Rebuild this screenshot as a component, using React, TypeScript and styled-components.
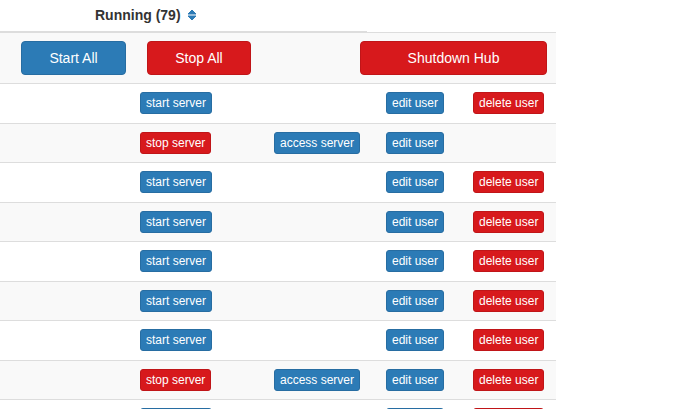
import React from "react";
import styled, { createGlobalStyle } from "styled-components";

const GlobalStyle = createGlobalStyle`
  html, body {
    margin: 0;
    padding: 0;
    background: #fff;
    font-family: "Liberation Sans", Arial, Helvetica, sans-serif;
    font-size: 14px;
    color: #333;
    overflow: hidden;
  }
  * { box-sizing: border-box; }
`;

const primary = "#2c7bb6";
const primaryBorder = "#276da2";
const danger = "#d7191c";
const dangerBorder = "#c01518";

const Page = styled.div`
  width: 679px;
  height: 409px;
  overflow: hidden;
`;

const Table = styled.div`
  width: 556px;
`;

const HeaderRow = styled.div`
  display: flex;
  height: 33px;
`;

const HeaderCell = styled.div`
  width: 367px;
  height: 33px;
  padding: 5px 0 0 95px;
  border-bottom: 2px solid #ddd;
  display: flex;
  align-items: flex-start;
  gap: 6px;
`;

const HeaderFiller = styled.div`
  flex: 1;
  height: 33px;
  border-bottom: 1px solid #ddd;
`;

const HeaderLabel = styled.span`
  font-weight: bold;
  font-size: 14px;
  line-height: 20px;
  color: #333;
`;

const SortIcon = styled.svg`
  margin-top: 4px;
  flex-shrink: 0;
`;

const ControlsRow = styled.div`
  display: grid;
  grid-template-columns: 126px 213px auto;
  align-items: start;
  height: 51px;
  padding: 8px 0 0 21px;
  background: #f9f9f9;
  border-bottom: 1px solid #ddd;
`;

const BigButton = styled.button<{ $danger?: boolean; $w: number }>`
  width: ${(p) => p.$w}px;
  height: 34px;
  padding: 6px 12px;
  font-family: inherit;
  font-size: 14px;
  line-height: 20px;
  color: #fff;
  background: ${(p) => (p.$danger ? danger : primary)};
  border: 1px solid ${(p) => (p.$danger ? dangerBorder : primaryBorder)};
  border-radius: 4px;
  text-align: center;
  cursor: pointer;
`;

const UserRow = styled.div<{ $striped: boolean }>`
  display: grid;
  grid-template-columns: 140px 134px 112px 87px auto;
  align-items: start;
  height: 39.5px;
  padding-top: 8px;
  background: ${(p) => (p.$striped ? "#f9f9f9" : "#fff")};
  border-bottom: 1px solid #ddd;
`;

const Cell = styled.div`
  display: flex;
`;

const SmallButton = styled.button<{ $danger?: boolean }>`
  height: 22px;
  padding: 1px 5px;
  font-family: inherit;
  font-size: 12px;
  line-height: 18px;
  color: #fff;
  background: ${(p) => (p.$danger ? danger : primary)};
  border: 1px solid ${(p) => (p.$danger ? dangerBorder : primaryBorder)};
  border-radius: 3px;
  white-space: nowrap;
  cursor: pointer;
`;

type User = { running: boolean; access: boolean; del: boolean };

const users: User[] = [
  { running: false, access: false, del: true },
  { running: true, access: true, del: false },
  { running: false, access: false, del: true },
  { running: false, access: false, del: true },
  { running: false, access: false, del: true },
  { running: false, access: false, del: true },
  { running: false, access: false, del: true },
  { running: true, access: true, del: true },
  { running: false, access: false, del: true },
];

const App: React.FC = () => {
  return (
    <Page>
      <GlobalStyle />
      <Table>
        <HeaderRow>
          <HeaderCell>
            <HeaderLabel>Running (79)</HeaderLabel>
            <SortIcon width="10" height="12" viewBox="0 0 10 12">
              <path d="M1 5 L5 1 L9 5 Z" fill={primary} stroke={primary} strokeWidth="1" strokeLinejoin="round" />
              <path d="M1 7 L9 7 L5 11 Z" fill={primary} stroke={primary} strokeWidth="1" strokeLinejoin="round" />
            </SortIcon>
          </HeaderCell>
          <HeaderFiller />
        </HeaderRow>

        <ControlsRow>
          <BigButton $w={105}>Start All</BigButton>
          <BigButton $w={104} $danger>Stop All</BigButton>
          <BigButton $w={187} $danger>Shutdown Hub</BigButton>
        </ControlsRow>

        {users.map((u, i) => (
          <UserRow key={i} $striped={i % 2 === 1}>
            <div />
            <Cell>
              {u.running ? (
                <SmallButton $danger>stop server</SmallButton>
              ) : (
                <SmallButton>start server</SmallButton>
              )}
            </Cell>
            <Cell>{u.access && <SmallButton>access server</SmallButton>}</Cell>
            <Cell>
              <SmallButton>edit user</SmallButton>
            </Cell>
            <Cell>{u.del && <SmallButton $danger>delete user</SmallButton>}</Cell>
          </UserRow>
        ))}
      </Table>
    </Page>
  );
};

export default App;
